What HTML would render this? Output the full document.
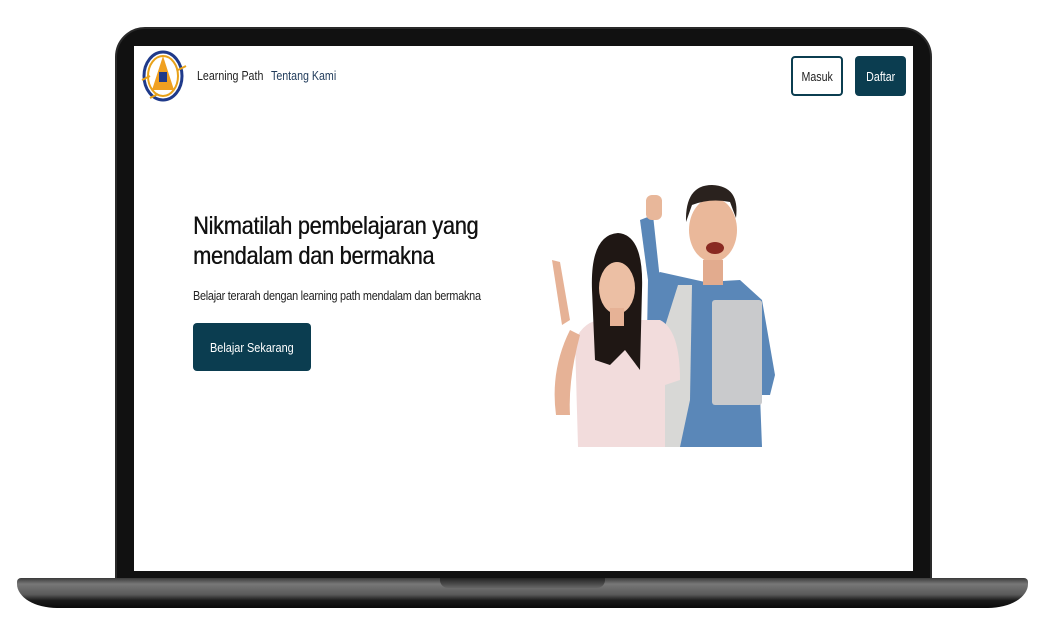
<!DOCTYPE html>
<html><head><meta charset="utf-8"><style>
*{margin:0;padding:0;box-sizing:border-box}
body{width:1042px;height:624px;background:#fff;position:relative;overflow:hidden;font-family:"Liberation Sans",sans-serif}
.bez{position:absolute;left:115px;top:27px;width:817px;height:556px;background:#111;border-radius:30px 30px 0 0;border:2px solid #2a2a2a}
.scr{position:absolute;left:134px;top:46px;width:779px;height:525px;background:#fff}
.base{position:absolute;left:17px;top:578px;width:1011px;height:30px;background:linear-gradient(#3a3a3a,#777 20%,#5a5a5a 55%,#1a1a1a 75%,#0a0a0a);border-radius:4px 4px 40px 40px/4px 4px 24px 24px}
.notch{position:absolute;left:440px;top:578px;width:165px;height:10px;background:linear-gradient(#222,#666);border-radius:0 0 8px 8px}
.sx{transform-origin:left top;white-space:nowrap}
.nav{position:absolute;font-size:13px;color:#222;top:68px;transform:scaleX(0.82)}
.btn{position:absolute;top:56px;width:52px;height:40px;border-radius:4px;font-size:13px;display:flex;align-items:center;justify-content:center}
.btn span{display:inline-block;transform:scaleX(0.82)}
h1{position:absolute;left:193px;top:211px;font-size:25px;font-weight:normal;line-height:30px;color:#111;letter-spacing:-0.3px;text-shadow:0.4px 0 0 #111;transform:scaleX(0.87)}
</style></head><body>
<div class="bez"></div>
<div class="base"></div><div class="notch"></div>
<div class="scr"></div>
<svg style="position:absolute;left:140px;top:46px" width="48" height="58" viewBox="0 0 48 58">
<ellipse cx="23" cy="30" rx="19" ry="24" fill="#fff" stroke="#1f3a8a" stroke-width="3"/>
<ellipse cx="23" cy="30" rx="15" ry="20" fill="none" stroke="#e8a21a" stroke-width="2"/>
<path d="M23 10 L34 44 L12 44 Z" fill="#f0a020"/>
<rect x="19" y="26" width="8" height="10" fill="#1f3a8a"/>
<path d="M2 34 L10 30 M38 24 L46 20 M10 52 L18 48" stroke="#e8a21a" stroke-width="2"/>
</svg>
<div class="nav sx" style="left:197px">Learning Path</div>
<div class="nav sx" style="left:271px;color:#1f3a5a">Tentang Kami</div>
<div class="btn" style="left:791px;border:2px solid #0b3d50;color:#222"><span>Masuk</span></div>
<div class="btn" style="left:855px;width:51px;background:#0b3d50;color:#fff"><span>Daftar</span></div>
<h1 class="sx">Nikmatilah pembelajaran yang<br>mendalam dan bermakna</h1>
<div class="sx" style="position:absolute;left:193px;top:289px;font-size:12.5px;color:#222;letter-spacing:-0.3px;transform:scaleX(0.87)">Belajar terarah dengan learning path mendalam dan bermakna</div>
<div style="position:absolute;left:193px;top:323px;width:118px;height:48px;background:#0b3d50;border-radius:4px;color:#fff;font-size:13px;display:flex;align-items:center;justify-content:center"><span style="display:inline-block;transform:scaleX(0.84)">Belajar Sekarang</span></div>
<svg style="position:absolute;left:540px;top:180px" width="250" height="270" viewBox="0 0 250 270">
<path d="M108 100 L120 92 L165 102 L200 100 L222 120 L235 195 L230 215 L220 215 L222 267 L105 267 Z" fill="#5a87b8"/>
<path d="M108 100 L100 40 L113 35 L120 100 Z" fill="#5a87b8"/>
<rect x="106" y="15" width="16" height="25" rx="6" fill="#e8b79a"/>
<path d="M138 105 L152 105 L150 220 L140 267 L105 267 L108 200 Z" fill="#d8d8d6"/>
<rect x="172" y="120" width="50" height="105" rx="3" fill="#c9cacc"/>
<ellipse cx="173" cy="50" rx="24" ry="32" fill="#eab89a"/>
<path d="M146 42 Q145 5 172 5 Q200 6 196 38 L190 22 Q170 18 152 25 Z" fill="#2a221e"/>
<rect x="163" y="80" width="20" height="25" fill="#e2ab8e"/>
<ellipse cx="175" cy="68" rx="9" ry="6" fill="#8a2a22"/>
<path d="M35 160 Q45 140 62 140 L120 140 Q140 150 140 200 L125 205 L125 267 L38 267 Z" fill="#f2dcdc"/>
<path d="M16 235 Q10 190 30 150 L40 155 Q28 200 30 235 Z" fill="#e6b296"/>
<path d="M12 80 L20 82 L30 140 L22 145 Z" fill="#e6b296"/>
<path d="M52 110 Q50 55 78 53 Q104 55 102 110 L100 190 L85 170 L70 185 L55 180 Z" fill="#1f1714"/>
<ellipse cx="77" cy="108" rx="18" ry="26" fill="#ecbfa4"/>
<rect x="70" y="128" width="14" height="18" fill="#e6b296"/>
</svg>
</body></html>
